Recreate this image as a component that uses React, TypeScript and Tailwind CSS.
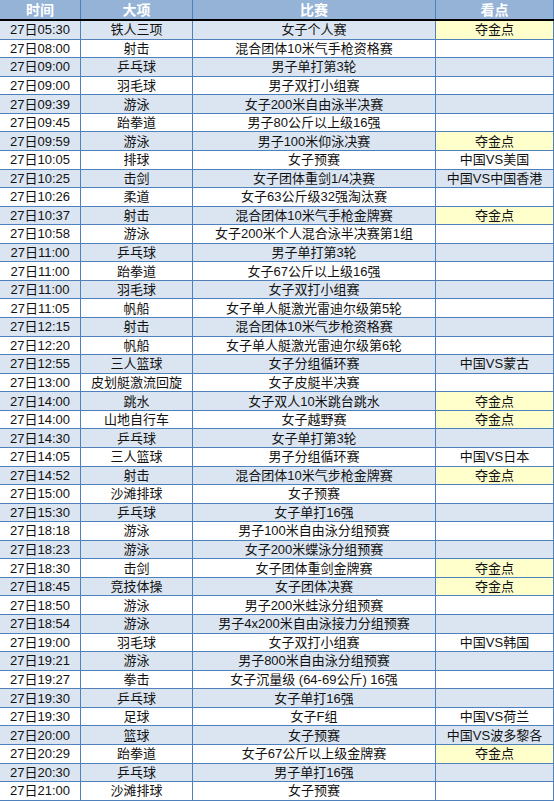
import React from "react";

type Row = [string, string, string, string?];

const rows: Row[] = [
  ["27日05:30", "铁人三项", "女子个人赛", "夺金点"],
  ["27日08:00", "射击", "混合团体10米气手枪资格赛"],
  ["27日09:00", "乒乓球", "男子单打第3轮"],
  ["27日09:00", "羽毛球", "男子双打小组赛"],
  ["27日09:39", "游泳", "女子200米自由泳半决赛"],
  ["27日09:45", "跆拳道", "男子80公斤以上级16强"],
  ["27日09:59", "游泳", "男子100米仰泳决赛", "夺金点"],
  ["27日10:05", "排球", "女子预赛", "中国VS美国"],
  ["27日10:25", "击剑", "女子团体重剑1/4决赛", "中国VS中国香港"],
  ["27日10:26", "柔道", "女子63公斤级32强淘汰赛"],
  ["27日10:37", "射击", "混合团体10米气手枪金牌赛", "夺金点"],
  ["27日10:58", "游泳", "女子200米个人混合泳半决赛第1组"],
  ["27日11:00", "乒乓球", "男子单打第3轮"],
  ["27日11:00", "跆拳道", "女子67公斤以上级16强"],
  ["27日11:00", "羽毛球", "女子双打小组赛"],
  ["27日11:05", "帆船", "女子单人艇激光雷迪尔级第5轮"],
  ["27日12:15", "射击", "混合团体10米气步枪资格赛"],
  ["27日12:20", "帆船", "女子单人艇激光雷迪尔级第6轮"],
  ["27日12:55", "三人篮球", "女子分组循环赛", "中国VS蒙古"],
  ["27日13:00", "皮划艇激流回旋", "女子皮艇半决赛"],
  ["27日14:00", "跳水", "女子双人10米跳台跳水", "夺金点"],
  ["27日14:00", "山地自行车", "女子越野赛", "夺金点"],
  ["27日14:30", "乒乓球", "女子单打第3轮"],
  ["27日14:05", "三人篮球", "男子分组循环赛", "中国VS日本"],
  ["27日14:52", "射击", "混合团体10米气步枪金牌赛", "夺金点"],
  ["27日15:00", "沙滩排球", "女子预赛"],
  ["27日15:30", "乒乓球", "女子单打16强"],
  ["27日18:18", "游泳", "男子100米自由泳分组预赛"],
  ["27日18:23", "游泳", "女子200米蝶泳分组预赛"],
  ["27日18:30", "击剑", "女子团体重剑金牌赛", "夺金点"],
  ["27日18:45", "竞技体操", "女子团体决赛", "夺金点"],
  ["27日18:50", "游泳", "男子200米蛙泳分组预赛"],
  ["27日18:54", "游泳", "男子4x200米自由泳接力分组预赛"],
  ["27日19:00", "羽毛球", "女子双打小组赛", "中国VS韩国"],
  ["27日19:21", "游泳", "男子800米自由泳分组预赛"],
  ["27日19:27", "拳击", "女子沉量级 (64-69公斤) 16强"],
  ["27日19:30", "乒乓球", "女子单打16强"],
  ["27日19:30", "足球", "女子F组", "中国VS荷兰"],
  ["27日20:00", "篮球", "女子预赛", "中国VS波多黎各"],
  ["27日20:29", "跆拳道", "女子67公斤以上级金牌赛", "夺金点"],
  ["27日20:30", "乒乓球", "男子单打16强"],
  ["27日21:00", "沙滩排球", "女子预赛"],
];

const cols = "grid grid-cols-[81px_112px_243px_118px]";
const cell =
  "flex items-center justify-center border-r border-[#4f81bd] whitespace-nowrap";

export default function App() {
  return (
    <div
      className="w-[554px] h-[801px] overflow-hidden bg-white text-[#111] text-[13px] leading-none"
      style={{ fontFamily: '"Liberation Sans", "Noto Sans CJK SC", sans-serif' }}
    >
      <div className={`${cols} h-[21px] bg-[#95b3d7] border-b-2 border-black text-white font-bold text-[14px]`}>
        <div className={cell}>时间</div>
        <div className={cell}>大项</div>
        <div className={cell}>比赛</div>
        <div className={cell}>看点</div>
      </div>
      {rows.map(([time, sport, event, note], i) => (
        <div
          key={i}
          className={`${cols} h-[18.57px] border-b border-[#4f81bd] ${
            i % 2 === 0 ? "bg-[#dbe5f1]" : "bg-white"
          }`}
        >
          <div className={cell}>{time}</div>
          <div className={cell}>{sport}</div>
          <div className={cell}>{event}</div>
          <div className={`${cell} ${note === "夺金点" ? "bg-[#ffffcc]" : ""}`}>
            {note ?? ""}
          </div>
        </div>
      ))}
    </div>
  );
}
